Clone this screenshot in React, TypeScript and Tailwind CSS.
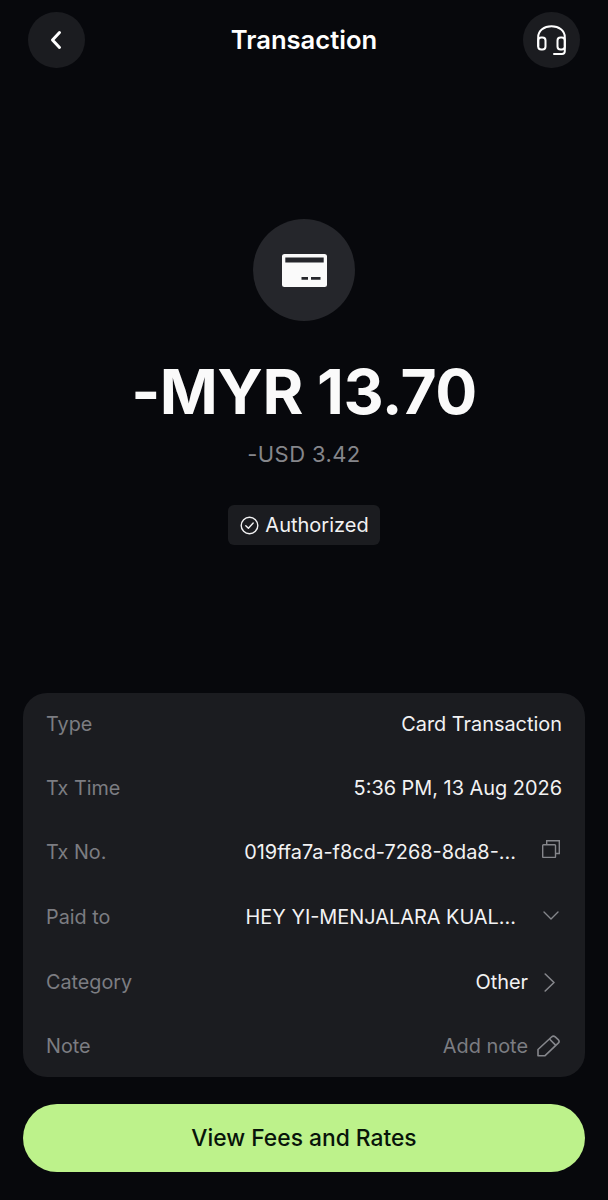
import React from "react";

function Row({ label, className, children }: { label: string; className: string; children: React.ReactNode }) {
  return (
    <div className={`flex items-center justify-between ${className}`}>
      <span className="text-[19.8px] leading-6 text-[#7c7d82]">{label}</span>
      <div className="flex items-center text-[19.9px] leading-6 text-[#f2f2f3]">{children}</div>
    </div>
  );
}

export default function App() {
  return (
    <div className="flex h-[1200px] w-[608px] flex-col overflow-hidden bg-[#07080c] font-['Inter',sans-serif] text-white">
      <header className="flex items-center justify-between px-[28px] pt-[12px]">
        <button className="flex h-[56px] w-[57px] items-center justify-center rounded-full bg-[#1b1c20]">
          <svg className="-ml-[1px]" width="12" height="20" viewBox="0 0 12 20" fill="none" stroke="white" strokeWidth="3" strokeLinecap="round" strokeLinejoin="round">
            <path d="M9.5 2.5L2.5 10L9.5 17.5" />
          </svg>
        </button>
        <h1 className="text-[25.6px] font-semibold leading-8">Transaction</h1>
        <button className="flex h-[56px] w-[57px] items-center justify-center rounded-full bg-[#1b1c20]">
          <svg width="29" height="30" viewBox="0 0 29 30" fill="none" stroke="white" strokeWidth="2" strokeLinecap="round" strokeLinejoin="round">
            <path d="M1.2 21V12C1.2 5.5 7 1.2 14.5 1.2S27.8 5.5 27.8 12V21" />
            <rect x="1.2" y="12.5" width="7.3" height="12" rx="3" />
            <rect x="20.5" y="12.5" width="7.3" height="12" rx="3" />
            <path d="M27.8 22V26.3C27.8 28 26.8 29 25 29H17" />
          </svg>
        </button>
      </header>

      <section className="flex flex-col items-center pt-[151px]">
        <div className="flex h-[102px] w-[102px] items-center justify-center rounded-full bg-[#25262b]">
          <svg width="45" height="33" viewBox="0 0 45 33">
            <path
              fillRule="evenodd"
              fill="#fafafa"
              d="M2.5 0H42.5A2.5 2.5 0 0 1 45 2.5V30.5A2.5 2.5 0 0 1 42.5 33H2.5A2.5 2.5 0 0 1 0 30.5V2.5A2.5 2.5 0 0 1 2.5 0ZM3.3 3.6V8.6H41.7V3.6ZM19.5 23V25.7H26V23ZM29 23V25.7H38.5V23Z"
            />
          </svg>
        </div>
        <div className="mt-[33px] text-[62.3px] font-bold leading-[76px] tracking-[-0.5px] text-[#fafafa]">-MYR 13.70</div>
        <div className="mt-[10px] text-[22px] leading-7 tracking-[0.4px] text-[#85868b]">-USD 3.42</div>
        <div className="mt-[37px] flex h-[40px] w-[152px] items-center justify-center gap-[6px] rounded-[6px] bg-[#1b1c20] pl-[1px]">
          <svg width="19" height="19" viewBox="0 0 19 19" fill="none" stroke="#f2f2f3" strokeWidth="1.4" strokeLinecap="round" strokeLinejoin="round">
            <circle cx="9.5" cy="9.5" r="8.3" />
            <path d="M5.8 9.8L8.4 12.3L13.2 7" />
          </svg>
          <span className="text-[20px] leading-6 text-[#f2f2f3]">Authorized</span>
        </div>
      </section>

      <section className="mx-[23px] mt-[148px] flex h-[384px] flex-col rounded-[24px] bg-[#1b1c20] px-[23px] pt-[19px]">
        <Row label="Type" className="h-[24px]">Card Transaction</Row>
        <Row label="Tx Time" className="mt-[40px] h-[24px]">5:36 PM, 13 Aug 2026</Row>
        <Row label="Tx No." className="mt-[40px] h-[24px]">
          <span>019ffa7a-f8cd-7268-8da8-...</span>
          <svg className="mb-[7px] ml-[26px] mr-[2px]" width="18" height="18" viewBox="0 0 18 18" fill="none" stroke="#85868b" strokeWidth="1.4">
            <rect x="0.7" y="4.7" width="12.8" height="12.8" rx="0.8" />
            <path d="M4.7 4.7V0.7H17.3V13.5H13.5" />
          </svg>
        </Row>
        <Row label="Paid to" className="mt-[41px] h-[24px]">
          <span>HEY YI-MENJALARA KUAL...</span>
          <svg className="mb-[4px] ml-[27px] mr-[3px]" width="16" height="9" viewBox="0 0 16 9" fill="none" stroke="#85868b" strokeWidth="1.4" strokeLinecap="round" strokeLinejoin="round">
            <path d="M1 1L8 8L15 1" />
          </svg>
        </Row>
        <Row label="Category" className="mt-[41px] h-[24px]">
          <span>Other</span>
          <svg className="ml-[16px] mr-[7px]" width="11" height="19" viewBox="0 0 11 19" fill="none" stroke="#85868b" strokeWidth="1.6" strokeLinecap="round" strokeLinejoin="round">
            <path d="M1.2 1L10 9.5L1.2 18" />
          </svg>
        </Row>
        <Row label="Note" className="mt-[40px] h-[24px]">
          <span className="text-[#7c7d82]">Add note</span>
          <svg className="ml-[9px] mr-[2px]" width="23" height="22" viewBox="0 0 23 22" fill="none" stroke="#85868b" strokeWidth="1.6" strokeLinejoin="round">
            <path d="M1 14.5L14.5 2C15.8 0.8 17 0.8 18.2 1.8L21.2 4.6C22.4 5.8 22.4 7 21.2 8.2L7.8 20.8H1Z" />
            <path d="M12.5 4L18.8 10.4" />
          </svg>
        </Row>
      </section>

      <button className="mx-[23px] mt-[27px] flex h-[68px] items-center justify-center rounded-full bg-[#bdf28b] pt-[1px] text-[22.8px] font-medium text-[#08140a]">
        View Fees and Rates
      </button>
    </div>
  );
}
